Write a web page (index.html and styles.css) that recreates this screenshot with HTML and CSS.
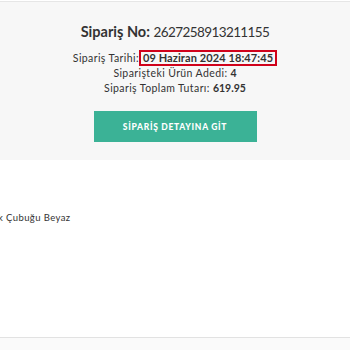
FILE: index.html
```
<!DOCTYPE html>
<html lang="tr">
<head>
<meta charset="utf-8">
<link rel="stylesheet" href="styles.css">
</head>
<body>
<section class="summary">
  <h1 class="title"><b>Sipariş No:</b> <span class="num">2627258913211155</span></h1>
  <div class="info">
    <div class="row">Sipariş Tarihi:<span class="date">09 Haziran 2024 18:47:45</span></div>
    <div class="row">Siparişteki Ürün Adedi: <b>4</b></div>
    <div class="row">Sipariş Toplam Tutarı: <b>619.95</b></div>
  </div>
  <a class="btn" href="#">SİPARİŞ DETAYINA GİT</a>
</section>
<section class="items">
  <div class="item-name">k Çubuğu Beyaz</div>
</section>
<div class="footer-line"></div>
</body>
</html>
```
FILE: styles.css
```
html, body {
  margin: 0;
  padding: 0;
  background: #fff;
  font-family: Lato, "Open Sans", sans-serif;
  color: #333;
}
.summary {
  border-top: 1px solid #e6e6e6;
  margin-top: 1px;
  background: #f7f7f7;
  height: 159px;
  display: flex;
  flex-direction: column;
  align-items: center;
  padding-top: 20px;
  box-sizing: border-box;
}
.title {
  margin: 0;
  font-size: 14.5px;
  font-weight: 400;
  line-height: 20px;
  color: #333;
}
.title b { font-weight: 700; }
.title .num {
  font-size: 13.5px;
  letter-spacing: -0.6px;
}
.info {
  margin-top: 8px;
  display: flex;
  flex-direction: column;
  align-items: center;
  font-size: 10.5px;
  letter-spacing: 0.4px;
  line-height: 15px;
}
.row b {
  font-weight: 700;
  letter-spacing: 0;
}
.date {
  font-weight: 700;
  font-size: 11px;
  letter-spacing: 0.1px;
  border: 2px solid #d0021b;
  padding: 0 2px;
  line-height: 12px;
  display: inline-block;
}
.btn {
  margin-top: 15px;
  width: 163px;
  height: 31px;
  background: #3bb296;
  color: #fff;
  font-size: 8.5px;
  font-weight: 900;
  text-decoration: none;
  display: flex;
  align-items: center;
  justify-content: center;
  letter-spacing: 0.7px;
}
.items {
  height: 177px;
  padding-top: 52px;
  box-sizing: border-box;
}
.item-name {
  font-size: 9.5px;
  letter-spacing: 0.4px;
  margin-left: -2px;
  color: #333;
}
.footer-line {
  border-top: 1px solid #e2e2e2;
  background: #fafafa;
  height: 14px;
}
```
